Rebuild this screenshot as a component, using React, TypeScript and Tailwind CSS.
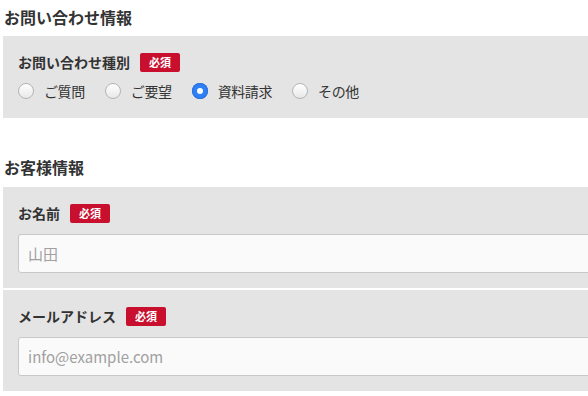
import React, { useState } from 'react';

const font = { fontFamily: '"Noto Sans CJK JP", "Noto Sans", sans-serif' };

const Required: React.FC = () => (
  <span className="inline-flex items-center justify-center h-[19px] w-[40px] rounded-[2px] bg-[#c8102e] text-white text-[11px] font-bold leading-none">
    必須
  </span>
);

const Radio: React.FC<{ label: string; checked: boolean; onClick: () => void }> = ({ label, checked, onClick }) => (
  <label className="flex items-center gap-[10px] mr-[20px] cursor-pointer" onClick={onClick}>
    {checked ? (
      <span className="w-[16px] h-[16px] rounded-full bg-[#2f7ff6] flex items-center justify-center shadow-[inset_0_0_0_1px_#2a6fdc]">
        <span className="w-[6px] h-[6px] rounded-full bg-white" />
      </span>
    ) : (
      <span className="w-[16px] h-[16px] rounded-full bg-gradient-to-b from-white to-[#e8e8e8] border border-[#b4b4b4]" />
    )}
    <span className="text-[14px] tracking-[-0.4px] text-[#333]">{label}</span>
  </label>
);

const Field: React.FC<{ label: string; placeholder: string }> = ({ label, placeholder }) => (
  <div className="bg-[#e4e4e4] pl-[15px] pt-[16px] pb-[15px]">
    <div className="flex items-center gap-[10px] h-[20px]">
      <span className="text-[14px] font-bold text-[#333]">{label}</span>
      <Required />
    </div>
    <input
      className="mt-[11px] block w-full h-[39px] bg-[#fafafa] border border-[#c8c8c8] rounded-[3px] px-[9px] text-[15px] text-[#333] placeholder:text-[#a0a0a0] outline-none"
      placeholder={placeholder}
    />
  </div>
);

const App: React.FC = () => {
  const [kind, setKind] = useState('資料請求');
  const kinds = ['ご質問', 'ご要望', '資料請求', 'その他'];

  return (
    <div className="w-[588px] h-[396px] overflow-hidden bg-white" style={font}>
      <div className="w-[660px] pl-[3px]">
        {/* お問い合わせ情報 */}
        <h2 className="pl-[1px] pt-[5px] h-[36px] text-[16px] font-bold text-[#333]">お問い合わせ情報</h2>
        <div className="bg-[#e4e4e4] pl-[15px] pt-[16px] h-[82px]">
          <div className="flex items-center gap-[10px] h-[20px]">
            <span className="text-[14px] font-bold text-[#333]">お問い合わせ種別</span>
            <Required />
          </div>
          <div className="flex items-center mt-[2px] h-[34px]">
            {kinds.map(k => (
              <Radio key={k} label={k} checked={kind === k} onClick={() => setKind(k)} />
            ))}
          </div>
        </div>

        {/* お客様情報 */}
        <h2 className="pl-[1px] pt-[37px] h-[69px] text-[16px] font-bold text-[#333]">お客様情報</h2>
        <div className="flex flex-col gap-[2px]">
          <Field label="お名前" placeholder="山田" />
          <Field label="メールアドレス" placeholder="info@example.com" />
        </div>
      </div>
    </div>
  );
};

export default App;
